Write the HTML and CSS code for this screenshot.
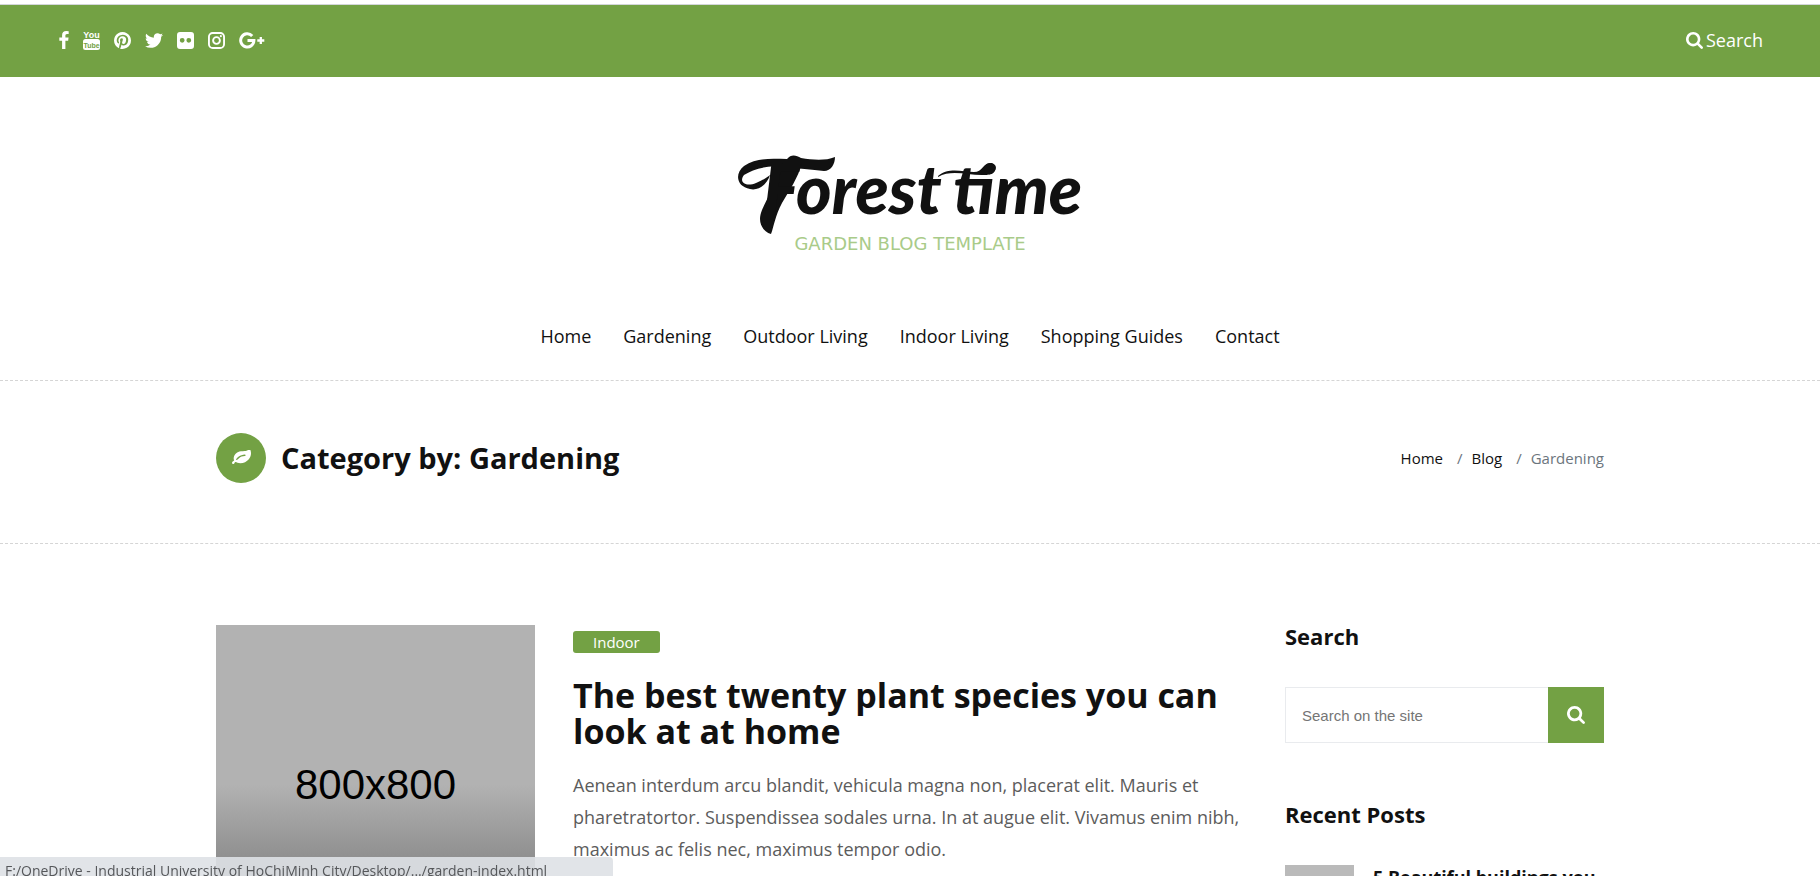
FILE: index.html
```html
<!DOCTYPE html>
<html lang="en">
<head>
<meta charset="utf-8">
<meta name="viewport" content="width=device-width, initial-scale=1">
<title>Forest Time - Gardening</title>
<link rel="stylesheet" href="styles.css">
</head>
<body>
<div class="topbar">
  <nav class="social" aria-label="Social links">
    <a href="#" aria-label="Facebook"><svg width="10" height="18" viewBox="479 0 864 1664"><path d="M1343 12v264h-157q-86 0-116 36t-30 108v189h293l-39 296h-254v759h-306v-759h-255v-296h255v-218q0-186 104-288.5t277-102.5q147 0 228 12z"/></svg></a>
    <a href="#" aria-label="YouTube"><svg width="17" height="20" viewBox="0 0 17 20"><text class="tube-top" x="8.5" y="8" text-anchor="middle">You</text><rect x="0" y="9" width="17" height="11" rx="2.5"/><text class="tube-bottom" x="8.5" y="17.5" text-anchor="middle">Tube</text></svg></a>
    <a href="#" aria-label="Pinterest"><svg width="17" height="17" viewBox="128 128 1536 1536"><path d="M1664 896q0 209-103 385.500t-279.500 279.500-385.500 103q-111 0-218-32 59-93 78-164 9-34 54-211 20 39 73 67.500t114 28.500q121 0 216-68.500t147-188.500 52-270q0-114-59.500-214t-172.500-163-255-63q-105 0-196 29t-154.500 77-109 110.500-67 129.500-21.500 134q0 104 40 183t117 111q30 12 38-20 2-7 8-31t8-30q6-23-11-43-51-61-51-151 0-151 104.500-259.500t273.500-108.500q151 0 235.500 82t84.500 213q0 170-68.500 289t-175.500 119q-61 0-98-43.500t-23-104.500q8-35 26.500-93.500t30-103 11.500-75.500q0-50-27-83t-77-33q-62 0-105 57t-43 142q0 73 25 122l-99 418q-17 70-13 177-206-91-333-281t-127-423q0-209 103-385.500t279.500-279.500 385.500-103 385.500 103 279.500 279.500 103 385.500z"/></svg></a>
    <a href="#" aria-label="Twitter"><svg width="18" height="15" viewBox="108 256 1576 1280"><path d="M1684 408q-67 98-162 167 1 14 1 42 0 130-38 259.500t-115.500 248.500-184.500 210.500-258 146-323 54.500q-271 0-496-145 35 4 78 4 225 0 401-138-105-2-188-64.500t-114-159.500q33 5 61 5 43 0 85-11-112-23-185.500-111.500t-73.500-205.500v-4q68 38 146 41-66-44-105-115t-39-154q0-88 44-163 121 149 294.500 238.500t371.500 99.500q-8-38-8-74 0-134 94.500-228.500t228.500-94.500q140 0 236 102 109-21 205-78-37 115-142 178 93-10 186-50z"/></svg></a>
    <a href="#" aria-label="Flickr"><svg width="17" height="17" viewBox="0 0 17 17"><path fill-rule="evenodd" d="M3 0h11a3 3 0 0 1 3 3v11a3 3 0 0 1-3 3H3a3 3 0 0 1-3-3V3a3 3 0 0 1 3-3zM5.200 5.900a2.400 2.400 0 1 0 0 4.800 2.400 2.400 0 0 0 0-4.800zm6.600 0a2.400 2.400 0 1 0 0 4.800 2.400 2.400 0 0 0 0-4.800z"/></svg></a>
    <a href="#" aria-label="Instagram"><svg class="line-icon" width="17" height="17" viewBox="0 0 18 18"><rect x="1" y="1" width="16" height="16" rx="4" stroke-width="2"/><circle cx="9" cy="9" r="3.600" stroke-width="2"/><circle cx="13.600" cy="4.400" r="0.500" stroke-width="1.200"/></svg></a>
    <a href="#" aria-label="Google Plus"><svg class="line-icon" width="26" height="17" viewBox="0 0 26 17"><path d="M13.200 4A6.600 6.600 0 1 0 14.900 8.500H8.500" stroke-width="3"/><path d="M21.800 5v7M18.300 8.500h7" stroke-width="2.300"/></svg></a>
  </nav>
  <button class="search-toggle" type="button"><svg width="17" height="17" viewBox="64 128 1664 1664"><path d="M1216 832q0-185-131.500-316.500t-316.500-131.500-316.500 131.500-131.500 316.500 131.500 316.500 316.500 131.500 316.500-131.500 131.500-316.500zm512 832q0 52-38 90t-90 38q-54 0-90-38l-343-342q-179 124-399 124-143 0-273.500-55.500t-225-150-150-225-55.500-273.500 55.500-273.500 150-225 225-150 273.500-55.500 273.500 55.500 225 150 150 225 55.500 273.500q0 220-124 399l343 343q37 37 37 90z"/></svg>Search</button>
</div>

<header class="header">
  <a class="logo" href="#">
    <svg class="logo-mark" width="348" height="80" viewBox="0 0 348 80">
      <path d="M99 3C99 10 95 17 88 17C76 16 62 14 46 13C32 11 17 15 8 21C2 29 11 33 20 29C27 26 32 23 34 21C31 31 22 37 14 35C1 33-2 20 8 12C21 3 37 5 51 5C55 0 60 1 65 4C77 6 89 7 99 3Z"/>
      <path d="M47 9L66 9C62 24 53 37 46 49C39 62 38 72 35 80C26 77 21 68 26 56C32 42 42 26 47 9Z"/>
      <path d="M202 22C213 13 226 18 238 18C247 18 247 8 256 9C264 12 259 21 249 21C233 22 216 15 202 23Z"/>
      <text x="27" y="60">Forest</text>
      <text x="217" y="60">time</text>
    </svg>
    <span class="tagline">GARDEN BLOG TEMPLATE</span>
  </a>
  <nav class="menu" aria-label="Main">
    <a href="#">Home</a><a href="#">Gardening</a><a href="#">Outdoor Living</a><a href="#">Indoor Living</a><a href="#">Shopping Guides</a><a href="#">Contact</a>
  </nav>
</header>

<section class="page-title">
  <div class="container title-row">
    <h1><span class="leaf"><svg width="19" height="16" viewBox="0 256 1792 1408"><path d="M1280 704q0-26-19-45t-45-19q-172 0-318 49.500t-259.500 134-235.500 219.500q-19 21-19 45 0 26 19 45t45 19q24 0 45-19 27-24 74-71t67-66q137-124 268.500-176t313.500-52q26 0 45-19t19-45zm512-198q0 95-20 193-46 224-184.500 383t-357.500 268q-214 108-438 108-148 0-286-47-15-5-88-42t-96-37q-16 0-39.500 32t-45 70-52.500 70-60 32q-43 0-63.500-17.500t-45.500-59.500q-2-4-6-11t-5.500-10-3-9.500-1.500-13.500q0-35 31-73.500t68-65.500 68-56 31-48q0-4-14-38t-16-44q-9-51-9-104 0-115 43.500-220t119-184.500 170.500-139 204-95.500q55-18 145-25.500t179.500-9 178.500-6 163.500-24 113.500-56.500l29.500-29.500 29.500-28 27-20 36.500-16 43.500-4.500q39 0 70.500 46t47.500 112 24 124 8 96z"/></svg></span>Category by: Gardening</h1>
    <ol class="breadcrumb">
      <li><a href="#">Home</a></li>
      <li><a href="#">Blog</a></li>
      <li>Gardening</li>
    </ol>
  </div>
</section>

<div class="container content">
  <main>
    <article class="post">
      <a class="thumb" href="#">800x800</a>
      <div class="post-body">
        <a class="badge" href="#">Indoor</a>
        <h2><a href="#">The best twenty plant species you can look at at home</a></h2>
        <p>Aenean interdum arcu blandit, vehicula magna non, placerat elit. Mauris et pharetratortor. Suspendissea sodales urna. In at augue elit. Vivamus enim nibh, maximus ac felis nec, maximus tempor odio.</p>
      </div>
    </article>
  </main>
  <aside class="sidebar">
    <section class="widget">
      <h3>Search</h3>
      <form class="search-form">
        <input type="text" placeholder="Search on the site" aria-label="Search on the site">
        <button type="submit" aria-label="Search"><svg width="18" height="18" viewBox="64 128 1664 1664"><path d="M1216 832q0-185-131.500-316.500t-316.500-131.500-316.500 131.500-131.500 316.500 131.500 316.500 316.500 131.500 316.500-131.500 131.500-316.500zm512 832q0 52-38 90t-90 38q-54 0-90-38l-343-342q-179 124-399 124-143 0-273.500-55.500t-225-150-150-225-55.500-273.500 55.500-273.500 150-225 225-150 273.500-55.500 273.500 55.500 225 150 150 225 55.500 273.500q0 220-124 399l343 343q37 37 37 90z"/></svg></button>
      </form>
    </section>
    <section class="widget">
      <h3>Recent Posts</h3>
      <a class="recent" href="#"><span class="recent-thumb"></span><span>5 Beautiful buildings you</span></a>
    </section>
  </aside>
</div>

<div class="status">F:/OneDrive - Industrial University of HoChiMinh City/Desktop/.../garden-index.html</div>
</body>
</html>
```
FILE: styles.css
```css
* { box-sizing: border-box; }
html { overflow: hidden; }
body {
  margin: 0;
  padding-top: 4px;
  background: #fff;
  color: #111;
  font-family: "Open Sans", "Noto Sans", sans-serif;
  font-size: 18px;
}
a { color: inherit; text-decoration: none; }
svg { display: block; }
h1, h2, h3, p { margin: 0; }
.container { max-width: 1388px; margin: 0 auto; }

.topbar {
  display: flex;
  justify-content: space-between;
  align-items: center;
  height: 73px;
  padding: 0 57px 2px 59px;
  border-top: 1px solid #d3d6d9;
  background: #73a144;
  color: #fff;
  fill: #fff;
}
.social { display: flex; align-items: center; gap: 14px; }
.line-icon { fill: none; stroke: #fff; }
.tube-top, .tube-bottom { font: bold 9px "Liberation Sans Narrow", "Liberation Sans", sans-serif; }
.tube-bottom { fill: #73a144; font-size: 7px; }
.search-toggle {
  display: flex;
  align-items: center;
  gap: 3px;
  padding: 0;
  border: 0;
  background: none;
  color: inherit;
  fill: inherit;
  font: 18px "Open Sans", sans-serif;
}

.header {
  display: flex;
  flex-direction: column;
  align-items: center;
  gap: 66px;
  padding: 77px 20px 28px;
  border-bottom: 1px dashed #d5d5d5;
}
.logo { display: flex; flex-direction: column; align-items: center; fill: #111; }
.logo-mark { overflow: visible; }
.logo-mark text { font: italic 900 68px Lato, sans-serif; }
.tagline { color: #a9cb89; font: 18px/20px "DejaVu Sans", sans-serif; }
.menu { display: flex; gap: 32px; line-height: 32px; }

.page-title { padding: 52px 0 60px; border-bottom: 1px dashed #d5d5d5; }
.title-row { display: flex; justify-content: space-between; align-items: center; }
h1 { display: flex; align-items: center; gap: 15px; font-size: 29px; line-height: 50px; }
.leaf {
  display: grid;
  place-items: center;
  width: 50px;
  height: 50px;
  border-radius: 50%;
  background: #73a144;
  fill: #fff;
}
.breadcrumb {
  display: flex;
  margin: 0;
  padding: 0;
  list-style: none;
  color: #6c757d;
  font-size: 15px;
}
.breadcrumb a { color: #111; }
.breadcrumb li + li::before { content: "/"; padding: 0 9px 0 14px; }

.content {
  display: grid;
  grid-template-columns: 1fr 319px;
  gap: 38px;
  padding-top: 81px;
}
.post { display: grid; grid-template-columns: 319px 1fr; gap: 38px; }
.thumb {
  display: grid;
  place-items: center;
  aspect-ratio: 1;
  background: linear-gradient(#b2b2b2 50%, #676767);
  color: #000;
  font: 42px "Liberation Sans", sans-serif;
}
.post-body { padding-top: 6px; }
.badge {
  display: block;
  width: max-content;
  padding: 0 20px;
  border-radius: 3px;
  background: #73a144;
  color: #fff;
  font-size: 15px;
  line-height: 22px;
}
h2 { margin: 24px 0 20px; font-size: 34px; line-height: 36px; }
.post p { color: #5c5c5c; font-size: 18px; line-height: 32px; }

.sidebar { display: grid; align-content: start; gap: 60px; }
h3 { font-size: 22px; line-height: 22px; }
.search-form { display: flex; margin-top: 40px; }
.search-form input {
  flex: 1;
  min-width: 0;
  height: 56px;
  padding: 0 16px;
  border: 1px solid #e9ebee;
  border-right: 0;
  font: 15px "Liberation Sans", Arial, sans-serif;
}
.search-form input::placeholder { color: #757575; }
.search-form button {
  display: grid;
  place-items: center;
  width: 56px;
  padding: 0;
  border: 0;
  background: #73a144;
  fill: #fff;
}
.recent { display: flex; gap: 19px; margin-top: 40px; font-size: 18px; font-weight: 700; line-height: 24px; white-space: nowrap; }
.recent-thumb { width: 69px; height: 69px; background: #bababa; }

.status {
  position: fixed;
  left: 0;
  bottom: 0;
  width: 613px;
  height: 19px;
  padding-left: 5px;
  overflow: hidden;
  border-radius: 0 4px 0 0;
  background: rgba(222, 225, 230, 0.9);
  color: #55575a;
  font-size: 14px;
  line-height: 28px;
  white-space: nowrap;
}
```
